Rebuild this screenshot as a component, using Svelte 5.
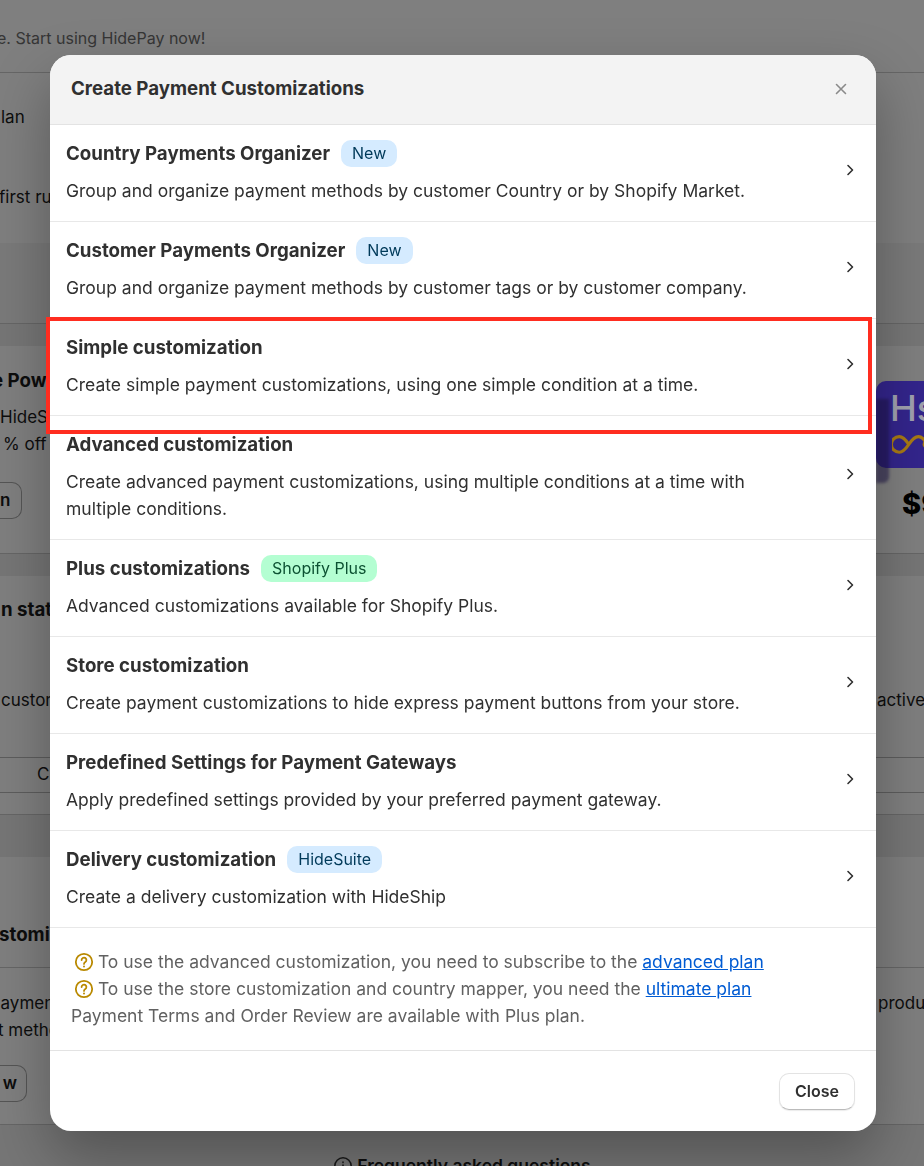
<script lang="ts">
  type Badge = { label: string; tone: 'info' | 'success' };
  type Row = { title: string; text: string; badge?: Badge };

  const rows: Row[] = [
    {
      title: 'Country Payments Organizer',
      text: 'Group and organize payment methods by customer Country or by Shopify Market.',
      badge: { label: 'New', tone: 'info' },
    },
    {
      title: 'Customer Payments Organizer',
      text: 'Group and organize payment methods by customer tags or by customer company.',
      badge: { label: 'New', tone: 'info' },
    },
    {
      title: 'Simple customization',
      text: 'Create simple payment customizations, using one simple condition at a time.',
    },
    {
      title: 'Advanced customization',
      text: 'Create advanced payment customizations, using multiple conditions at a time with multiple conditions.',
    },
    {
      title: 'Plus customizations',
      text: 'Advanced customizations available for Shopify Plus.',
      badge: { label: 'Shopify Plus', tone: 'success' },
    },
    {
      title: 'Store customization',
      text: 'Create payment customizations to hide express payment buttons from your store.',
    },
    {
      title: 'Predefined Settings for Payment Gateways',
      text: 'Apply predefined settings provided by your preferred payment gateway.',
    },
    {
      title: 'Delivery customization',
      text: 'Create a delivery customization with HideShip',
      badge: { label: 'HideSuite', tone: 'info' },
    },
  ];
</script>

{#snippet help()}
  <svg class="help" viewBox="0 0 20 20" fill="none" stroke="#b98900" stroke-width="1.8">
    <circle cx="10" cy="10" r="8.2" />
    <path d="M7.6 8a2.4 2.4 0 1 1 3.7 2c-.8.5-1.3 1-1.3 1.9" stroke-linecap="round" />
    <circle cx="10" cy="14.4" r="1" fill="#b98900" stroke="none" />
  </svg>
{/snippet}

<div class="page">
  <section class="card first">
    <div class="banner"><span class="cut-start">e. Start using HidePay now!</span></div>
    <div class="plan">
      <p class="plan-line">lan</p>
      <p class="run-line">first run</p>
    </div>
    <div class="card-foot"></div>
  </section>

  <section class="card promo">
    <div class="promo-text">
      <p class="strong pow">e Power</p>
      <p class="hs">HideSuite</p>
      <p class="off">% off plans</p>
      <span class="ghost-btn n">n</span>
    </div>
    <div class="promo-side">
      <div class="logo">
        <span class="logo-text">Hs</span>
        <svg class="loop" viewBox="0 0 40 20" fill="none" stroke="#a87a14" stroke-width="2.6">
          <path d="M14 9.500C11 5 8.500 3 6 3a6.500 6.500 0 0 0 0 13c2.500 0 5-2 8-6.500S19 3 22 3s5 2 7 6.500" />
          <circle cx="29" cy="9.500" r="3.500" fill="#a87a14" stroke="none" />
        </svg>
      </div>
      <p class="price">$9</p>
    </div>
  </section>

  <section class="card status">
    <p class="strong stat">n status</p>
    <div class="status-line">
      <span>custom</span>
      <span>active</span>
    </div>
    <div class="tabs"><span>C</span></div>
  </section>

  <section class="card custom">
    <p class="strong stomi">stomizations</p>
    <div class="custom-body">
      <div class="custom-line"><span class="cut-pay">payment</span><span>produ</span></div>
      <p class="meth">t methods</p>
      <span class="ghost-btn w">w</span>
    </div>
  </section>

  <div class="faq">
    <svg class="faq-icon" viewBox="0 0 20 20" fill="none" stroke="#333" stroke-width="1.6">
      <circle cx="10" cy="10" r="8.2" />
      <path d="M10 9v5M10 6v.6" stroke-linecap="round" />
    </svg>
    <span>Frequently asked questions</span>
  </div>
</div>

<div class="scrim"></div>

<div class="modal" role="dialog" aria-label="Create Payment Customizations">
  <header class="modal-head">
    <h2>Create Payment Customizations</h2>
    <svg class="x" viewBox="0 0 12 12" fill="none" stroke="#8a8a8a" stroke-width="1.6" stroke-linecap="round">
      <path d="M1.500 1.500l9 9M10.500 1.500l-9 9" />
    </svg>
  </header>

  <ul class="rows">
    {#each rows as row}
      <li class="row">
        <div class="row-body">
          <div class="row-title">
            <strong>{row.title}</strong>
            {#if row.badge}
              <span class="badge {row.badge.tone}">{row.badge.label}</span>
            {/if}
          </div>
          <p>{row.text}</p>
        </div>
        <svg class="chevron" viewBox="0 0 8 14" fill="none" stroke="#303030" stroke-width="1.6" stroke-linecap="round" stroke-linejoin="round">
          <path d="M2 2.500L6.500 7 2 11.500" />
        </svg>
      </li>
    {/each}
  </ul>

  <div class="note">
    <p class="indent">{@render help()} To use the advanced customization, you need to subscribe to the <a href="#advanced">advanced plan</a></p>
    <p class="indent">{@render help()} To use the store customization and country mapper, you need the <a href="#ultimate">ultimate plan</a></p>
    <p>Payment Terms and Order Review are available with Plus plan.</p>
  </div>

  <footer class="modal-foot">
    <button type="button">Close</button>
  </footer>
</div>

<div class="highlight"></div>

<style>
  :global(body) {
    margin: 0;
    font-family: Inter, 'Liberation Sans', sans-serif;
    font-size: 17.5px;
    color: #303030;
    overflow: hidden;
  }

  p {
    margin: 0;
  }

  /* page behind the dialog */
  .page {
    height: 1166px;
    overflow: hidden;
    background: #ececec;
    display: flex;
    flex-direction: column;
    gap: 22px;
    color: #1a1a1a;
    font-size: 17px;
    line-height: 27px;
  }
  .card {
    background: #fff;
    border-bottom: 1px solid #ccc;
    flex: none;
    box-sizing: border-box;
  }
  .strong {
    font-size: 18.7px;
    font-weight: 700;
  }

  .first {
    height: 324px;
    display: flex;
    flex-direction: column;
  }
  .banner {
    height: 73px;
    box-sizing: border-box;
    border-bottom: 1px solid #ccc;
    padding-top: 25px;
    font-size: 16px;
    color: #6d6d6d;
  }
  .cut-start {
    margin-left: -3px;
  }
  .plan {
    flex: 1;
    padding-top: 31px;
  }
  .plan-line {
    margin-left: 1px;
  }
  .run-line {
    margin-top: 53px;
    margin-left: -1px;
  }
  .card-foot {
    height: 80px;
    background: #f4f4f4;
  }

  .promo {
    height: 208px;
    display: flex;
    justify-content: space-between;
  }
  .pow {
    margin-top: 21px;
    margin-left: -8px;
  }
  .hs {
    margin-top: 10px;
  }
  .off {
    margin-left: 3px;
  }
  .ghost-btn {
    display: block;
    box-sizing: border-box;
    border: 1px solid #aaa;
    border-radius: 10px;
    background: #fff;
    text-align: right;
    font-weight: 600;
    line-height: 34px;
  }
  .ghost-btn.n {
    width: 22px;
    height: 37px;
    margin-top: 24px;
    padding-right: 15px;
    border-left: 0;
    border-radius: 0 10px 10px 0;
  }
  .promo-side {
    padding-top: 35px;
    width: 48px;
  }
  .logo {
    position: relative;
    z-index: 1;
    width: 120px;
    height: 87px;
    background: #33258c;
    border-radius: 10px 0 0 10px;
    padding: 5px 0 0 14px;
    box-sizing: border-box;
    display: flex;
    flex-direction: column;
  }
  .logo::before {
    content: '';
    position: absolute;
    left: 0;
    top: 18px;
    width: 13px;
    height: 84px;
    background: rgba(30, 20, 70, 0.55);
    border-radius: 0 0 6px 0;
    filter: blur(1.5px);
  }
  .logo-text {
    color: #a0a0ae;
    font-size: 36px;
    line-height: 44px;
    font-weight: 500;
  }
  .loop {
    width: 48px;
    height: 24px;
    margin-left: 2px;
    margin-top: 3px;
  }
  .price {
    margin-top: 19px;
    margin-left: 26px;
    font-size: 29px;
    font-weight: 800;
    line-height: 34px;
    color: #000;
  }

  .status {
    height: 239px;
    padding-top: 20px;
  }
  .stat {
    margin-left: 1px;
  }
  .status-line {
    display: flex;
    justify-content: space-between;
    margin-top: 64px;
  }
  .status-line span:first-child {
    margin-left: 1px;
  }
  .status-line span:last-child {
    width: 47px;
  }
  .tabs {
    margin-top: 43px;
    height: 36px;
    box-sizing: border-box;
    border-top: 1px solid #bbb;
    border-bottom: 1px solid #bbb;
    padding-left: 37px;
    line-height: 33px;
  }

  .custom {
    margin-top: 20px;
    height: 268px;
    padding-top: 64px;
  }
  .stomi {
    margin-left: -1px;
    height: 47px;
    box-sizing: border-box;
    line-height: 27px;
    border-bottom: 1px solid #ccc;
    margin-top: 0;
    padding-bottom: 20px;
    margin-bottom: 22px;
  }
  .custom-line {
    display: flex;
    justify-content: space-between;
  }
  .custom-line span:last-child {
    width: 46px;
  }
  .cut-pay {
    margin-left: -10px;
  }
  .meth {
    margin-left: -2px;
  }
  .ghost-btn.w {
    width: 27px;
    height: 37px;
    margin-top: 21px;
    padding-right: 9px;
    border-left: 0;
    border-radius: 0 10px 10px 0;
  }

  .faq {
    margin-top: 5px;
    display: flex;
    align-items: center;
    gap: 4px;
    font-size: 17.5px;
    font-weight: 600;
    flex: none;
  }
  .faq::before,
  .faq::after {
    content: '';
    flex: 1;
    height: 1px;
    background: #bbb;
    margin-top: 2px;
  }
  .faq::before {
    margin-right: 21px;
  }
  .faq::after {
    margin-left: 21px;
  }
  .faq-icon {
    width: 20px;
    height: 20px;
  }

  .scrim {
    position: fixed;
    inset: 0;
    background: rgba(0, 0, 0, 0.5);
  }

  /* dialog */
  .modal {
    position: fixed;
    z-index: 2;
    top: 55px;
    left: 50px;
    width: 826px;
    height: 1076px;
    background: #fff;
    border-radius: 21px;
    overflow: hidden;
    display: flex;
    flex-direction: column;
    box-shadow: 0 26px 60px rgba(0, 0, 0, 0.3);
  }
  .modal-head {
    height: 70px;
    flex: none;
    box-sizing: border-box;
    background: #f3f3f3;
    border-bottom: 1px solid #e3e3e3;
    display: flex;
    align-items: center;
    justify-content: space-between;
    padding: 0 29px 2px 21px;
  }
  .modal-head h2 {
    margin: 0;
    font-size: 18.7px;
    font-weight: 700;
    color: #303030;
  }
  .x {
    width: 12px;
    height: 12px;
  }

  .rows {
    list-style: none;
    margin: 0;
    padding: 0;
  }
  .row {
    display: flex;
    align-items: center;
    justify-content: space-between;
    border-bottom: 1px solid #e8e8e8;
    padding: 15px 22px 17px 16px;
  }
  .row-body {
    flex: 1;
    max-width: 720px;
  }
  .row-title {
    display: flex;
    align-items: center;
    gap: 11px;
    height: 27px;
    margin-bottom: 10px;
  }
  .row-title strong {
    font-size: 18.7px;
    font-weight: 700;
    color: #303030;
  }
  .row p {
    line-height: 27px;
    color: #303030;
  }
  .badge {
    height: 27px;
    font-size: 16px;
    line-height: 27px;
    padding: 0 11px;
    border-radius: 10px;
  }
  .badge.info {
    background: #d5ebff;
    color: #003a5a;
  }
  .badge.success {
    background: #b4fed2;
    color: #0c5132;
  }
  .chevron {
    width: 8px;
    height: 14px;
    margin-bottom: 5px;
    flex: none;
  }

  .note {
    flex: 1;
    padding: 20px 21px 0;
    color: #616161;
    line-height: 27px;
    border-bottom: 1px solid #e3e3e3;
  }
  .indent {
    white-space: nowrap;
  }
  .help {
    width: 20px;
    height: 20px;
    vertical-align: -4px;
    margin-left: 3px;
    margin-right: -1px;
  }
  .note a {
    color: #005bd3;
    text-decoration: underline;
  }

  .modal-foot {
    height: 80px;
    flex: none;
    display: flex;
    justify-content: flex-end;
    align-items: center;
    padding-right: 21px;
  }
  .modal-foot button {
    width: 76px;
    height: 37px;
    font: 600 16px Inter, 'Liberation Sans', sans-serif;
    color: #303030;
    background: #fff;
    border: 1px solid #e3e3e3;
    border-bottom-color: #bbb;
    border-radius: 10px;
    box-shadow: 0 1px 1px rgba(0, 0, 0, 0.08);
  }

  .highlight {
    position: fixed;
    z-index: 3;
    left: 46px;
    top: 317px;
    width: 826px;
    height: 117px;
    box-sizing: border-box;
    border: 4px solid #ff2d20;
  }
</style>
